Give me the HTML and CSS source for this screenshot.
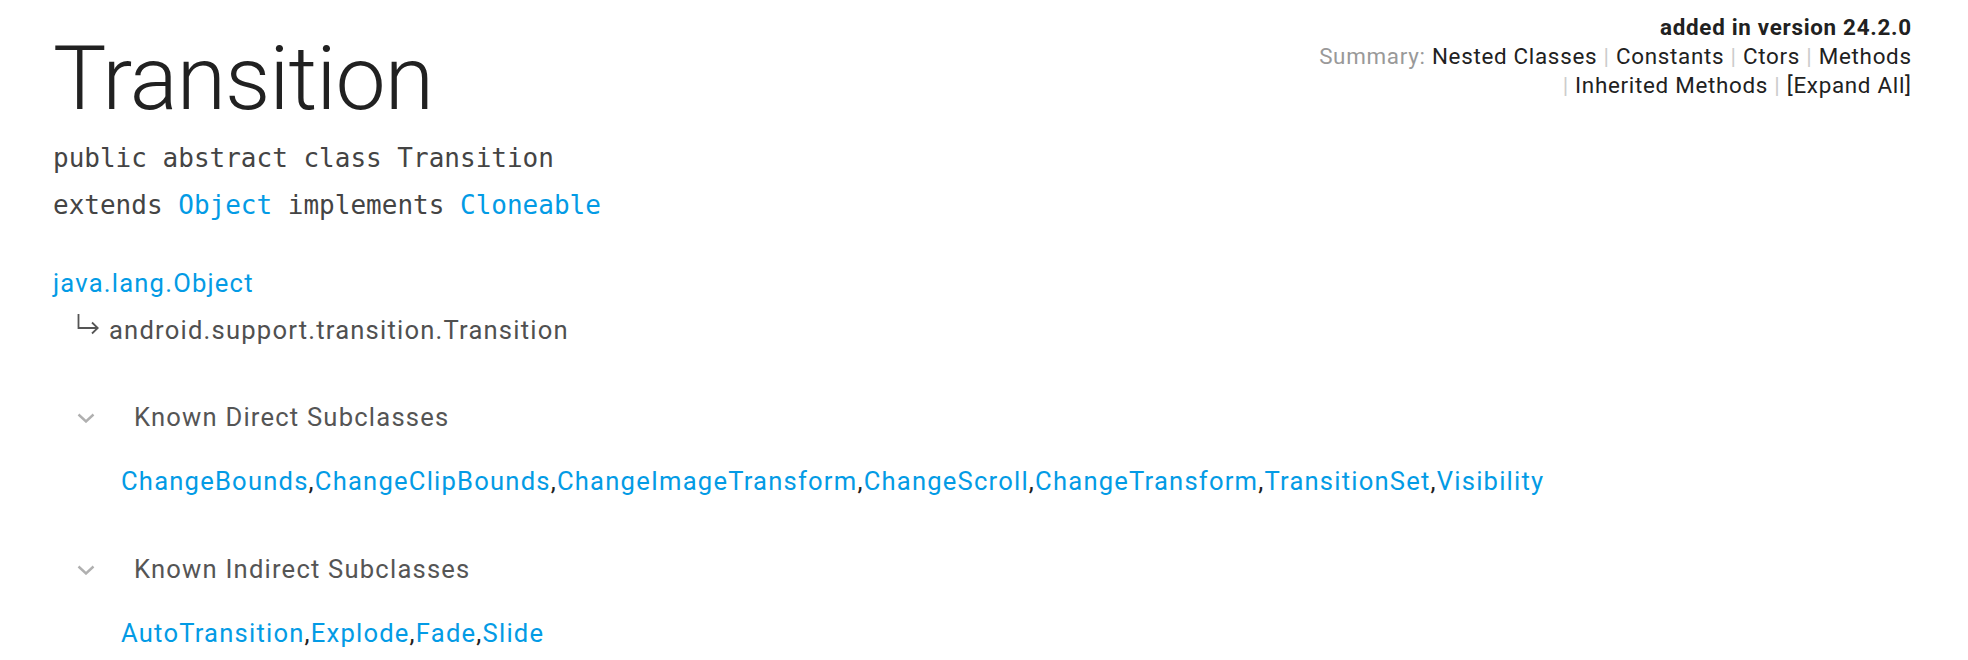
FILE: index.html
```html
<!DOCTYPE html>
<html lang="en">
<head>
<meta charset="utf-8">
<title>Transition</title>
<link rel="stylesheet" href="styles.css">
</head>
<body>
<div class="page">
  <header class="head">
    <h1 class="title">Transition</h1>
    <div class="api-info">
      <div class="api-level">added in version 24.2.0</div>
      <div class="summary">
        <span class="sum-label">Summary:</span>
        <a href="#">Nested Classes</a> <span class="sep">|</span>
        <a href="#">Constants</a> <span class="sep">|</span>
        <a href="#">Ctors</a> <span class="sep">|</span>
        <a href="#">Methods</a><br>
        <span class="sep">|</span> <a href="#">Inherited Methods</a>
        <span class="sep">|</span> <a href="#">[Expand All]</a>
      </div>
    </div>
  </header>

  <div class="sig">
    <p class="code">public abstract class Transition</p>
    <p class="code">extends <a class="link" href="#">Object</a> implements <a class="link" href="#">Cloneable</a></p>
  </div>

  <div class="inherit">
    <div class="inh-row"><a class="link" href="#">java.lang.Object</a></div>
    <div class="inh-row inh-child"><svg class="arrow" width="22" height="22" viewBox="0 0 22 22" aria-label="↳"><path d="M1.5 1 V15 H20.5 M15 9.5 L20.8 15 L15 20.5" fill="none" stroke="#555555" stroke-width="1.8"/></svg>android.support.transition.Transition</div>
  </div>

  <section class="subs">
    <div class="subs-head">
      <svg class="chev" width="18" height="10" viewBox="0 0 18 10"><path d="M1.5 1.5 L9 8.5 L16.5 1.5" fill="none" stroke="#b0b0b0" stroke-width="2.4"/></svg>
      <span class="subs-label">Known Direct Subclasses</span>
    </div>
    <div class="subs-list"><a class="link" href="#">ChangeBounds</a>,<a class="link" href="#">ChangeClipBounds</a>,<a class="link" href="#">ChangeImageTransform</a>,<a class="link" href="#">ChangeScroll</a>,<a class="link" href="#">ChangeTransform</a>,<a class="link" href="#">TransitionSet</a>,<a class="link" href="#">Visibility</a></div>
  </section>

  <section class="subs">
    <div class="subs-head">
      <svg class="chev" width="18" height="10" viewBox="0 0 18 10"><path d="M1.5 1.5 L9 8.5 L16.5 1.5" fill="none" stroke="#b0b0b0" stroke-width="2.4"/></svg>
      <span class="subs-label">Known Indirect Subclasses</span>
    </div>
    <div class="subs-list"><a class="link" href="#">AutoTransition</a>,<a class="link" href="#">Explode</a>,<a class="link" href="#">Fade</a>,<a class="link" href="#">Slide</a></div>
  </section>
</div>
</body>
</html>
```

FILE: styles.css
```css
html, body {
  margin: 0;
  padding: 0;
  background: #ffffff;
}

body {
  font-family: Roboto, "Liberation Sans", sans-serif;
  color: #212121;
  overflow: hidden;
}

a {
  text-decoration: none;
  color: inherit;
}

.page {
  padding: 0 57px 0 53px;
}

.head {
  display: flex;
  justify-content: space-between;
  align-items: flex-start;
}

.title {
  margin: 25px 0 0 0;
  font-size: 89.6px;
  font-weight: 300;
  line-height: 107.5px;
  letter-spacing: -1px;
  color: #212121;
}

.api-info {
  margin-top: 13px;
  margin-right: -0.7px;
  text-align: right;
  font-size: 22.4px;
  line-height: 28.8px;
  letter-spacing: 0.7px;
  color: #212121;
}

.api-level {
  font-weight: 700;
}

.sum-label {
  color: #999999;
}

.sep {
  color: #cccccc;
}

.sig {
  margin-top: 2.5px;
}

.code {
  margin: 0;
  font-family: "DejaVu Sans Mono", "Liberation Mono", monospace;
  font-size: 26px;
  line-height: 47px;
  color: #444444;
}

.link {
  color: #039be5;
}

.inherit {
  margin-top: 31px;
  font-size: 25.6px;
  line-height: 47px;
  letter-spacing: 1.2px;
}

.inh-child {
  padding-left: 24px;
  color: #505050;
}

.arrow {
  vertical-align: 4px;
  margin-right: 10px;
}

.subs {
  margin-top: 40px;
  font-size: 25.6px;
  line-height: 47px;
  letter-spacing: 1.2px;
}

.subs + .subs {
  margin-top: 41px;
}

.subs-head {
  display: flex;
  align-items: center;
  padding-left: 24px;
  color: #555555;
}

.chev {
  flex: none;
  margin-right: 39px;
  filter: blur(0.4px);
}

.subs-list {
  margin-top: 17px;
  padding-left: 68px;
}
```
